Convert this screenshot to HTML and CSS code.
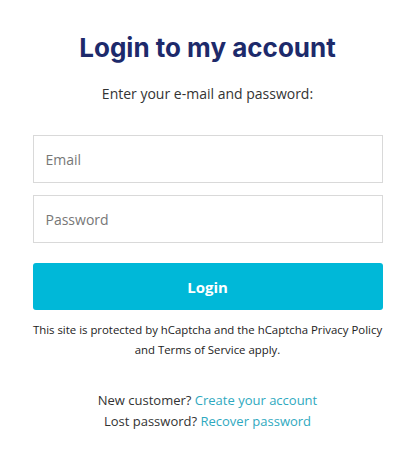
FILE: index.html
```html
<!DOCTYPE html>
<html lang="en">

<head>
    <meta charset="UTF-8">
    <meta name="viewport" content="width=device-width, initial-scale=1.0">
    <title>Login</title>
    <link rel="stylesheet" href="styles.css">
</head>

<body>
    <div class="container">
        <h1 class="title">Login to my account</h1>
        <p class="subtitle">Enter your e-mail and password:</p>
        <form class="login-form">
            <input type="email" class="field" placeholder="Email">
            <input type="password" class="field" placeholder="Password">
            <button type="submit" class="login-btn">Login</button>
        </form>
        <p class="captcha">This site is protected by hCaptcha and the hCaptcha Privacy Policy and Terms of Service apply.</p>
        <div class="links">
            <p>New customer? <a href="#">Create your account</a></p>
            <p>Lost password? <a href="#">Recover password</a></p>
        </div>
    </div>
</body>

</html>
```

FILE: styles.css
```css
body {
    font-family: "Open Sans", "Noto Sans", sans-serif;
    margin: 0;
    padding: 0;
    background-color: #fff;
    color: #333;
}

.container {
    width: 350px;
    margin: 0 auto;
    padding-top: 32px;
    text-align: center;
}

.title {
    font-family: Inter, "Noto Sans", sans-serif;
    font-size: 26px;
    font-weight: 700;
    line-height: 32px;
    color: #1d2a6b;
    margin: 0;
}

.subtitle {
    font-size: 14px;
    line-height: 20px;
    margin: 20px 0 0;
    color: #333;
}

.login-form {
    display: flex;
    flex-direction: column;
    gap: 12px;
    margin-top: 31px;
}

.field {
    height: 48px;
    box-sizing: border-box;
    padding: 0 12px;
    border: 1px solid #d9d9d9;
    border-radius: 0;
    font-family: inherit;
    font-size: 14px;
    color: #333;
}

.field::placeholder {
    color: #777;
}

.login-btn {
    height: 47px;
    margin-top: 8px;
    border: none;
    border-radius: 3px;
    background-color: #00b8d8;
    color: #fff;
    font-family: inherit;
    font-size: 15px;
    font-weight: 700;
    cursor: pointer;
}

.captcha {
    font-size: 11.4px;
    line-height: 20px;
    margin: 10px 0 0;
    color: #222;
}

.links {
    margin-top: 30px;
    font-size: 13px;
    line-height: 21px;
}

.links p {
    margin: 0;
}

.links a {
    color: #2fa9c0;
    text-decoration: none;
}
```
